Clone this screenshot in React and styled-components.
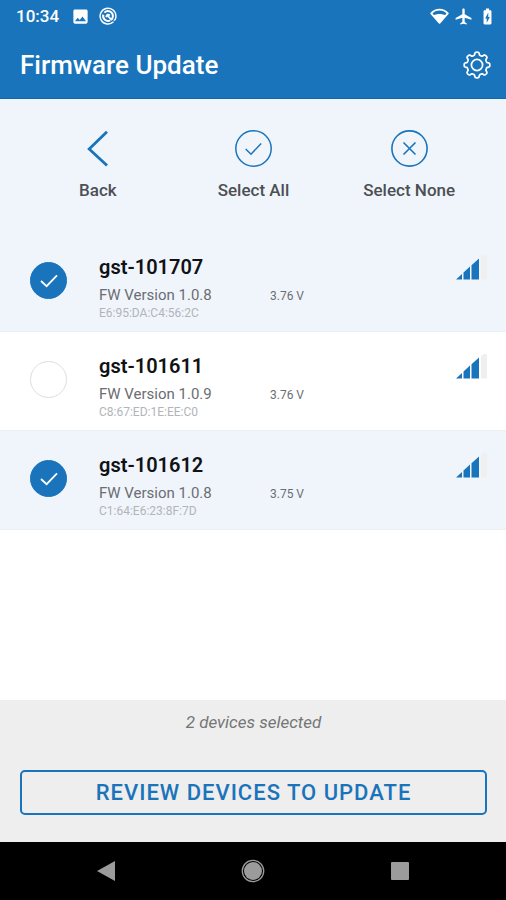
import React, { useState } from "react";
import styled, { createGlobalStyle } from "styled-components";
import { MdImage, MdAirplanemodeActive, MdBatteryChargingFull } from "react-icons/md";

const BLUE = "#1a74bb";
const ICE = "#f0f5fc";

const GlobalStyle = createGlobalStyle`
  * { box-sizing: border-box; }
  body {
    margin: 0;
    background: #fff;
    font-family: Roboto, "Noto Sans", sans-serif;
  }
  button { font: inherit; border: 0; padding: 0; background: none; cursor: pointer; }
  svg { display: block; flex: none; }
`;

const Page = styled.div`
  display: flex;
  flex-direction: column;
  min-height: 100vh;
`;

const TopArea = styled.div`
  background: ${BLUE};
  color: #fff;
  border-bottom: 1px solid #1268ad;
`;

const StatusBar = styled.div`
  display: flex;
  align-items: center;
  justify-content: space-between;
  height: 32px;
  padding: 0 9px 0 16px;
`;

const StatusGroup = styled.div`
  display: flex;
  align-items: center;
  gap: ${(p) => p.$gap}px;
`;

const Clock = styled.span`
  font-size: 17px;
  line-height: 20px;
  font-weight: 500;
  margin-right: 3px;
`;

const Header = styled.header`
  display: flex;
  align-items: center;
  justify-content: space-between;
  height: 66px;
  padding: 0 15px 0 20px;
`;

const Title = styled.h1`
  margin: 0;
  font-size: 26px;
  line-height: 30px;
  font-weight: 500;
`;

const IconButton = styled.button`
  color: #fff;
`;

const Main = styled.main`
  flex: 1;
`;

const Toolbar = styled.div`
  display: grid;
  grid-template-columns: repeat(3, 1fr);
  padding: 31px 19px 33px 20px;
  background: ${ICE};
`;

const Tool = styled.button`
  display: flex;
  flex-direction: column;
  align-items: center;
  gap: 13px;
  color: #4c4f53;

  svg { color: ${BLUE}; }
`;

const ToolLabel = styled.span`
  font-size: 17px;
  line-height: 20px;
  font-weight: 500;
`;

const DeviceList = styled.ul`
  margin: 0;
  padding: 0;
  list-style: none;
`;

const DeviceRow = styled.li`
  display: grid;
  grid-template-columns: 37px 139px 1fr auto;
  column-gap: 32px;
  height: 99px;
  padding: 22px 18px 0 30px;
  background: ${(p) => (p.$selected ? ICE : "#fff")};
  border-bottom: 1px solid #edf0f3;
`;

const Tick = styled.span`
  display: grid;
  width: 37px;
  height: 37px;
  margin-top: 7px;

  > * { grid-area: 1 / 1; }
  svg { place-self: center; color: #fff; pointer-events: none; }
`;

const TickInput = styled.input`
  appearance: none;
  width: 37px;
  height: 37px;
  margin: 0;
  border: 1px solid #dedede;
  border-radius: 50%;
  background: #fff;
  cursor: pointer;

  &:checked { background: ${BLUE}; border-color: ${BLUE}; }
`;

const DeviceText = styled.label`
  display: flex;
  flex-direction: column;
  white-space: nowrap;
`;

const DeviceName = styled.span`
  font-size: 20px;
  line-height: 24px;
  font-weight: 600;
  color: #111214;
`;

const Firmware = styled.span`
  margin-top: 6px;
  font-size: 15px;
  line-height: 20px;
  color: #6b6d71;
`;

const Address = styled.span`
  font-size: 12px;
  line-height: 16px;
  color: #b2b4b8;
`;

const Voltage = styled.span`
  margin-top: 32px;
  font-size: 12px;
  line-height: 18px;
  color: #6b6d71;
`;

const Footer = styled.footer`
  display: flex;
  flex-direction: column;
  gap: 37px;
  padding: 12px 19px 27px 20px;
  background: #eee;
`;

const Summary = styled.p`
  margin: 0;
  text-align: center;
  font-size: 17px;
  line-height: 21px;
  font-style: italic;
  color: #757575;
`;

const ReviewButton = styled.button`
  && {
    height: 45px;
    border: 2px solid ${BLUE};
    border-radius: 5px;
    color: ${BLUE};
    font-size: 22px;
    line-height: 26px;
    font-weight: 500;
    letter-spacing: 1px;
  }
`;

const NavBar = styled.nav`
  display: grid;
  grid-template-columns: repeat(3, 1fr);
  height: 58px;
  padding: 0 33px;
  background: #000;
`;

const NavButton = styled.button`
  display: flex;
  align-items: center;
  justify-content: center;
  color: #9b9b9b;
`;

const AtIcon = () => (
  <svg width="18" height="18" viewBox="0 0 18 18" fill="none" stroke="currentColor">
    <path d="M14.5 14.8A7.9 7.9 0 1 1 16.9 9c0 2.6-.9 4.4-2.3 4.4" strokeWidth="1.4" />
    <path d="M5.4 5.6A4.9 4.9 0 0 1 13.9 9c0 1.3-.4 2.4-1.2 3.2M11.3 13.3A4.9 4.9 0 0 1 4.3 7.6" strokeWidth="2" />
    <path d="m7.4 7.6 5.6 5.6M6.800 9.800 9 7.500l2 .8" strokeWidth="1.7" />
  </svg>
);

const WifiIcon = () => (
  <svg width="19" height="16" viewBox="0 0 19 16">
    <path d="M1.2 5.3C5.8.3 13.2.3 17.8 5.3L9.5 14.8Z" fill="none" stroke="currentColor" strokeWidth="1.8" strokeLinejoin="round" />
    <path d="M3.2 7.6C7 5.600 12 5.600 15.8 7.6L9.5 14.8Z" fill="currentColor" />
  </svg>
);

const gearPath = (() => {
  const pts = [];
  const steps = 144;
  for (let i = 0; i < steps; i += 1) {
    const a = (i / steps) * Math.PI * 2;
    const wave = Math.tanh(2.4 * Math.cos(8 * a)) / Math.tanh(2.4);
    const r = 11.4 + 1.4 * wave;
    pts.push(`${(14 + r * Math.cos(a)).toFixed(2)} ${(14 + r * Math.sin(a)).toFixed(2)}`);
  }
  return `M${pts.join("L")}Z`;
})();

const GearIcon = () => (
  <svg width="28" height="28" viewBox="0 0 28 28" fill="none" stroke="currentColor" strokeWidth="1.7" strokeLinejoin="round">
    <path d={gearPath} />
    <circle cx="14" cy="14" r="5.6" />
  </svg>
);

const BackIcon = () => (
  <svg width="37" height="37" viewBox="0 0 37 37" fill="none" stroke="currentColor" strokeWidth="2.8">
    <path d="M28 1.8 10.2 18.9 28 35.5" />
  </svg>
);

const SelectAllIcon = () => (
  <svg width="37" height="37" viewBox="0 0 37 37" fill="none" stroke="currentColor" strokeWidth="1.5">
    <circle cx="18.5" cy="18.5" r="17.7" />
    <path d="m10.7 19 5.3 5.2 10.2-10.8" />
  </svg>
);

const SelectNoneIcon = () => (
  <svg width="37" height="37" viewBox="0 0 37 37" fill="none" stroke="currentColor" strokeWidth="1.6">
    <circle cx="18.5" cy="18.5" r="17.6" />
    <path d="m12.5 12.5 12 12m0-12-12 12" />
  </svg>
);

const CheckIcon = () => (
  <svg width="18" height="14" viewBox="0 0 18 14" fill="none" stroke="currentColor" strokeWidth="1.8">
    <path d="m1 7 5.6 5.2L17 1.4" />
  </svg>
);

const SignalIcon = () => (
  <svg width="32" height="28" viewBox="0 2 32 28" fill={BLUE}>
    <path d="M0 26.5 6 21v5.5Z" />
    <path d="M7.5 19.6 14 13.5v13H7.5Z" />
    <path d="M15.5 12.2 23 5.5v21H15.5Z" />
    <path d="M25 4 31 0v26.5H25Z" fill="#efefef" />
  </svg>
);

const NavBackIcon = () => (
  <svg width="20" height="22" viewBox="0 0 20 22" fill="currentColor"><path d="M1 11 19 1v20Z" /></svg>
);

const HomeIcon = () => (
  <svg width="24" height="24" viewBox="0 0 24 24" fill="currentColor">
    <circle cx="12" cy="12" r="9" />
    <circle cx="12" cy="12" r="10.7" fill="none" stroke="currentColor" strokeWidth="1.3" />
  </svg>
);

const RecentsIcon = () => (
  <svg width="20" height="20" viewBox="0 0 20 20" fill="currentColor"><rect x="1" y="1" width="18" height="18" rx="1" /></svg>
);

const devices = [
  { id: "gst-101707", firmware: "1.0.8", address: "E6:95:DA:C4:56:2C", voltage: "3.76 V" },
  { id: "gst-101611", firmware: "1.0.9", address: "C8:67:ED:1E:EE:C0", voltage: "3.76 V" },
  { id: "gst-101612", firmware: "1.0.8", address: "C1:64:E6:23:8F:7D", voltage: "3.75 V" },
];

export default function App() {
  const [selected, setSelected] = useState(["gst-101707", "gst-101612"]);

  const toggle = (id) =>
    setSelected((ids) => (ids.includes(id) ? ids.filter((x) => x !== id) : [...ids, id]));

  return (
    <Page>
      <GlobalStyle />
      <TopArea>
        <StatusBar>
          <StatusGroup $gap={9}>
            <Clock>10:34</Clock>
            <MdImage size={19} />
            <AtIcon />
          </StatusGroup>
          <StatusGroup $gap={5}>
            <WifiIcon />
            <MdAirplanemodeActive size={19} />
            <MdBatteryChargingFull size={19} />
          </StatusGroup>
        </StatusBar>
        <Header>
          <Title>Firmware Update</Title>
          <IconButton type="button" aria-label="Settings"><GearIcon /></IconButton>
        </Header>
      </TopArea>
      <Main>
        <Toolbar>
          <Tool type="button">
            <BackIcon />
            <ToolLabel>Back</ToolLabel>
          </Tool>
          <Tool type="button" onClick={() => setSelected(devices.map((d) => d.id))}>
            <SelectAllIcon />
            <ToolLabel>Select All</ToolLabel>
          </Tool>
          <Tool type="button" onClick={() => setSelected([])}>
            <SelectNoneIcon />
            <ToolLabel>Select None</ToolLabel>
          </Tool>
        </Toolbar>
        <DeviceList>
          {devices.map((d) => {
            const on = selected.includes(d.id);
            return (
              <DeviceRow key={d.id} $selected={on}>
                <Tick>
                  <TickInput type="checkbox" id={d.id} checked={on} onChange={() => toggle(d.id)} />
                  {on && <CheckIcon />}
                </Tick>
                <DeviceText htmlFor={d.id}>
                  <DeviceName>{d.id}</DeviceName>
                  <Firmware>FW Version {d.firmware}</Firmware>
                  <Address>{d.address}</Address>
                </DeviceText>
                <Voltage>{d.voltage}</Voltage>
                <SignalIcon />
              </DeviceRow>
            );
          })}
        </DeviceList>
      </Main>
      <Footer>
        <Summary>{selected.length} devices selected</Summary>
        <ReviewButton type="button">REVIEW DEVICES TO UPDATE</ReviewButton>
      </Footer>
      <NavBar>
        <NavButton type="button" aria-label="Back"><NavBackIcon /></NavButton>
        <NavButton type="button" aria-label="Home"><HomeIcon /></NavButton>
        <NavButton type="button" aria-label="Recent apps"><RecentsIcon /></NavButton>
      </NavBar>
    </Page>
  );
}
